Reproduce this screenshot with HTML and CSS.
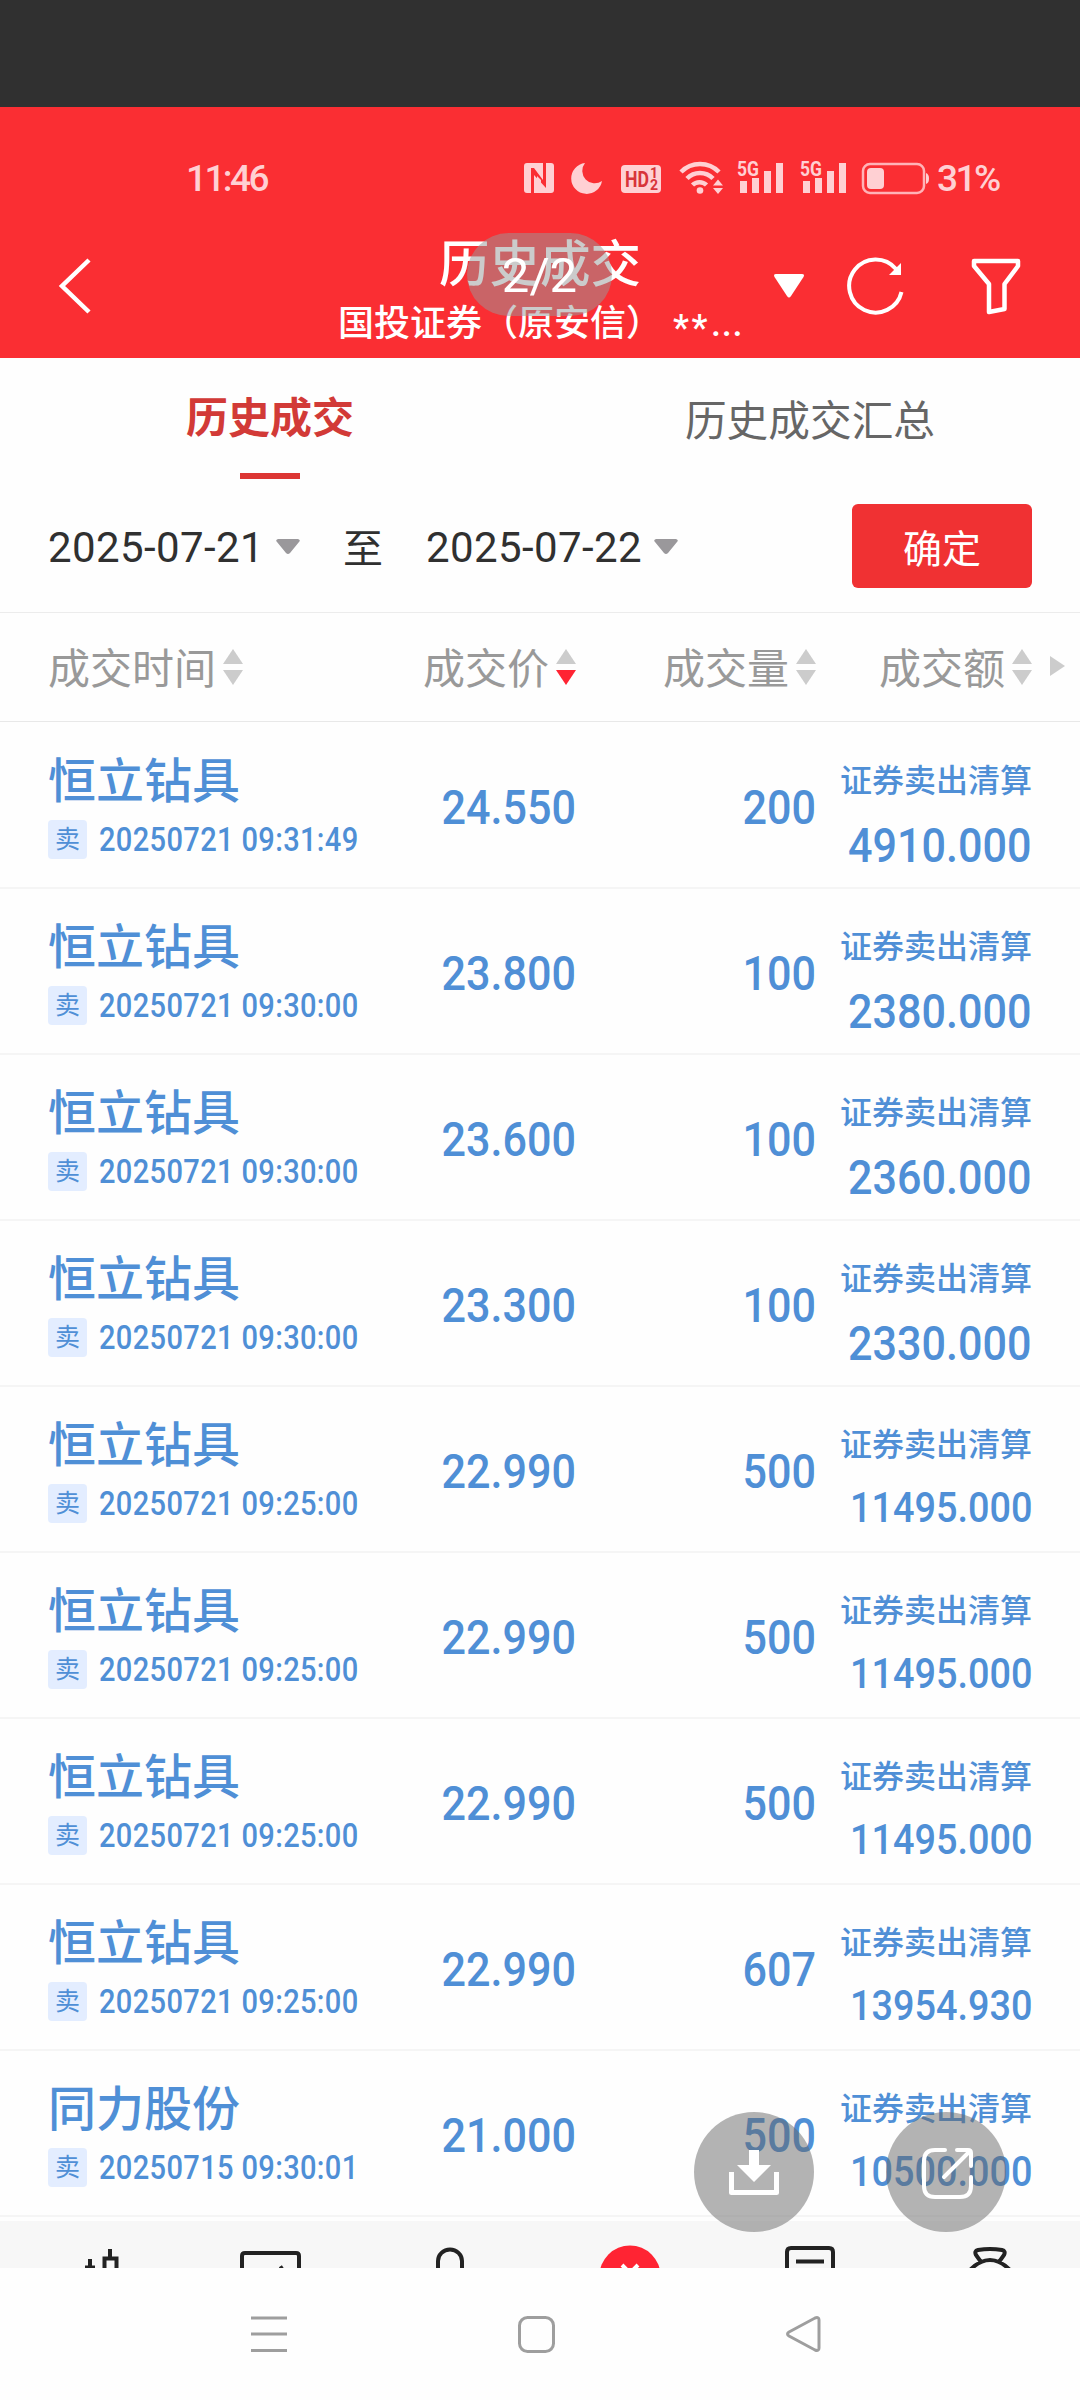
FILE: index.html
```html
<!DOCTYPE html>
<html lang="zh-CN">
<head>
    <meta charset="UTF-8">
    <meta name="viewport" content="width=device-width, initial-scale=1.0">
    <title>历史成交</title>
    <link rel="stylesheet" href="styles.css">
</head>
<body>
    <div class="top-strip"></div>

    <header class="header">
        <div class="status-bar">
            <span class="status-time">11:46</span>
            <svg class="status-icons" width="410" height="40" viewBox="522 157 410 40">
                <!-- NFC -->
                <path fill-rule="evenodd" d="M527 163h24q3 0 3 3v24q0 3-3 3h-24q-3 0-3-3v-24q0-3 3-3zM531 168v25h3v-18l12 13v-25h-3v17l-9-12z"/>
                <path d="M537 176l4 4v9l-4 3z"/>
                <!-- Do not disturb -->
                <path d="M585 163a15.500 15.500 0 1 0 17 18a12.500 12.500 0 0 1-17-18z"/>
                <!-- HD -->
                <rect x="621" y="165" width="40" height="28" rx="4"/>
                <text class="hd-text" x="625" y="187" textLength="24" lengthAdjust="spacingAndGlyphs">HD</text>
                <text class="hd-num" x="650" y="178">1</text>
                <text class="hd-num" x="650" y="190">2</text>
                <!-- Wi-Fi -->
                <g class="line">
                    <path d="M681 172a26.500 26.500 0 0 1 38 0M687 178.500a18 18 0 0 1 26 0M692.500 185a10 10 0 0 1 14 0"/>
                </g>
                <circle cx="700" cy="190.500" r="3.300"/>
                <path d="M713 185.500l5-6 5 6zM713 188l5 6 5-6z"/>
                <!-- Signals -->
                <text class="net-text" x="737" y="176" textLength="22" lengthAdjust="spacingAndGlyphs">5G</text>
                <path d="M740 181h7v12h-7zM752 178h7v15h-7zM764 171h7v22h-7zM776 163h7v30h-7z"/>
                <text class="net-text" x="800" y="176" textLength="22" lengthAdjust="spacingAndGlyphs">5G</text>
                <path d="M803 181h7v12h-7zM815 178h7v15h-7zM827 171h7v22h-7zM839 163h7v30h-7z"/>
                <!-- Battery -->
                <rect class="battery" x="863" y="164" width="61" height="29" rx="7"/>
                <rect x="867" y="168" width="17" height="21" rx="4"/>
                <path d="M926 173q3 1 3 5.500t-3 5.500z"/>
            </svg>
            <span class="status-battery">31%</span>
        </div>

        <div class="title-bar">
            <svg class="icon-back" width="34" height="60" viewBox="0 0 34 60"><path d="M31 4L4 30l27 26"/></svg>
            <div class="title-box">
                <h1>历史成交</h1>
                <p>国投证券（原安信）&nbsp;<span class="mask">**</span><span class="dots">...</span></p>
                <span class="page-badge">2/2</span>
            </div>
            <svg class="icon-caret" width="32" height="26" viewBox="0 0 32 26"><path d="M3 1h26q3 0 1.500 3L18 23q-2 3-4 0L1.500 4Q0 1 3 1z"/></svg>
            <svg class="icon-refresh" width="62" height="62" viewBox="0 0 62 62">
                <path class="line" d="M56.500 37A26.500 26.500 0 1 1 51 14"/>
                <path class="fill" d="M56 8v12H44z"/>
            </svg>
            <svg class="icon-filter" width="52" height="58" viewBox="0 0 52 58"><path d="M4 4h44v5L34.500 27v25L19 55V27L4 9z"/></svg>
        </div>
    </header>

    <nav class="tabs">
        <div class="tab active">历史成交</div>
        <div class="tab">历史成交汇总</div>
    </nav>

    <div class="date-bar">
        <span class="date">2025-07-21</span>
        <svg class="date-caret" width="24" height="15" viewBox="0 0 24 15"><path d="M2 0h20q3 1 1 3L14 14q-2 2-4 0L1 3Q-1 1 2 0z"/></svg>
        <span class="date-to">至</span>
        <span class="date">2025-07-22</span>
        <svg class="date-caret" width="24" height="15" viewBox="0 0 24 15"><path d="M2 0h20q3 1 1 3L14 14q-2 2-4 0L1 3Q-1 1 2 0z"/></svg>
        <button class="confirm">确定</button>
    </div>

    <div class="grid table-head">
        <div class="th">成交时间<span class="sort"></span></div>
        <div class="th">成交价<span class="sort down"></span></div>
        <div class="th">成交量<span class="sort"></span></div>
        <div class="th">成交额<span class="sort"></span></div>
        <span class="more"></span>
    </div>

    <div class="trade-list" id="trade-list">
        <!-- Trades will appear here -->
    </div>

    <div class="bottom-tabs">
        <svg width="180" height="47" viewBox="0 2221 180 47"><path d="M90 2259v9M85 2267.500h10M110 2249v9M104.500 2268v-9.500h12v9.500"/></svg>
        <svg width="180" height="47" viewBox="180 2221 180 47"><path d="M242 2268v-12q0-3 3-3h51q3 0 3 3v12M280 2269l3-2"/></svg>
        <svg width="180" height="47" viewBox="360 2221 180 47"><path d="M438 2270v-9a12 11.500 0 0 1 24 0v9"/></svg>
        <svg width="180" height="47" viewBox="540 2221 180 47"><circle class="red" cx="630" cy="2276" r="30.500"/><path class="white" d="M622 2265l8 8 8-8"/></svg>
        <svg width="180" height="47" viewBox="720 2221 180 47"><path d="M787 2270v-18q0-4 4-4h38q4 0 4 4v18M796 2261.500h28"/></svg>
        <svg width="180" height="47" viewBox="900 2221 180 47"><path d="M981 2262l-5-7q-2-4 2-5 12-2 24 0 4 1 2 5l-5 7M970 2270q20-20 40 0"/></svg>
    </div>

    <div class="system-nav">
        <svg width="36" height="38" viewBox="0 0 36 38"><path d="M0 3h36M0 19h36M0 35.500h36"/></svg>
        <svg width="40" height="38" viewBox="0 0 40 38"><rect x="3.500" y="2.500" width="34" height="34" rx="8"/></svg>
        <svg width="38" height="38" viewBox="0 0 38 38"><path d="M4 17L30 3q4-1.500 4 2v28q0 3.500-4 2L4 21q-3-2 0-4z"/></svg>
    </div>

    <div class="float-buttons">
        <button class="float-btn">
            <svg width="60" height="60" viewBox="724 2142 60 60">
                <path class="fill" d="M749 2150h10v15h12l-17 17-17-17h12z"/>
                <path class="tray" d="M731.500 2172v20.500h45V2172"/>
            </svg>
        </button>
        <button class="float-btn">
            <svg width="60" height="60" viewBox="916 2142 60 60">
                <path class="line" d="M945 2150h-10q-11 0-11 11v25q0 11 11 11h25q11 0 11-11v-9M957 2150h11q3 0 3 3v13M969 2152l-25 25"/>
            </svg>
        </button>
    </div>

    <script>
        const trades = [
            { name: '恒立钻具', time: '20250721 09:31:49', price: '24.550', volume: 200, amount: '4910.000' },
            { name: '恒立钻具', time: '20250721 09:30:00', price: '23.800', volume: 100, amount: '2380.000' },
            { name: '恒立钻具', time: '20250721 09:30:00', price: '23.600', volume: 100, amount: '2360.000' },
            { name: '恒立钻具', time: '20250721 09:30:00', price: '23.300', volume: 100, amount: '2330.000' },
            { name: '恒立钻具', time: '20250721 09:25:00', price: '22.990', volume: 500, amount: '11495.000' },
            { name: '恒立钻具', time: '20250721 09:25:00', price: '22.990', volume: 500, amount: '11495.000' },
            { name: '恒立钻具', time: '20250721 09:25:00', price: '22.990', volume: 500, amount: '11495.000' },
            { name: '恒立钻具', time: '20250721 09:25:00', price: '22.990', volume: 607, amount: '13954.930' },
            { name: '同力股份', time: '20250715 09:30:01', price: '21.000', volume: 500, amount: '10500.000' }
        ];

        const list = document.getElementById('trade-list');
        trades.forEach(trade => {
            const row = document.createElement('div');
            row.className = 'grid trade';
            // Long amounts use a smaller size so they fit the column
            const size = trade.amount.length > 8 ? 'amount small' : 'amount';
            row.innerHTML = `
                <div class="stock">
                    <div class="name">${trade.name}</div>
                    <div class="meta"><span class="side">卖</span><span class="time">${trade.time}</span></div>
                </div>
                <div class="num">${trade.price}</div>
                <div class="num">${trade.volume}</div>
                <div class="settle">
                    <div class="label">证券卖出清算</div>
                    <div class="${size}">${trade.amount}</div>
                </div>
            `;
            list.appendChild(row);
        });
    </script>
</body>
</html>
```

FILE: styles.css
```css
* {
    box-sizing: border-box;
}
body {
    margin: 0;
    width: 1080px;
    height: 2400px;
    position: relative;
    overflow: hidden;
    background-color: #fefefe;
    font-family: Roboto, "Noto Sans CJK SC", sans-serif;
}
svg {
    display: block;
    flex-shrink: 0;
}
button {
    border: none;
    padding: 0;
    font-family: inherit;
}
.top-strip {
    height: 107px;
    background-color: #303030;
}

/* Header */
.header {
    height: 251px;
    background-color: #fa2e33;
    color: #fff;
}
.status-bar {
    height: 126px;
    padding: 50px 0 0 186px;
    display: flex;
    align-items: flex-start;
    color: #ffd0d3;
    font-size: 37px;
    line-height: 44px;
}
.status-time {
    width: 336px;
    font-weight: 500;
    letter-spacing: -2.6px;
}
.status-icons {
    fill: #ffd0d3;
}
.status-icons .line {
    fill: none;
    stroke: #ffd0d3;
    stroke-width: 4.5;
}
.status-icons .battery {
    fill: none;
    stroke: #ffb3b7;
    stroke-width: 2.5;
}
.hd-text {
    font-size: 22px;
    font-weight: bold;
    fill: #d8343a;
}
.hd-num {
    font-size: 14px;
    font-weight: bold;
    fill: #d8343a;
}
.net-text {
    font-size: 21px;
    font-weight: bold;
}
.status-battery {
    margin-left: 5px;
    font-weight: 500;
    letter-spacing: -2.5px;
}
.title-bar {
    height: 125px;
    padding-left: 58px;
    display: flex;
}
.icon-back {
    margin-top: 23px;
    fill: none;
    stroke: #fff;
    stroke-width: 4.5;
}
.title-box {
    position: relative;
    width: 432px;
    margin-left: 230px;
    padding-left: 16px;
}
.title-box h1 {
    margin: 0 0 0 101px;
    font-size: 50.5px;
    font-weight: 500;
    line-height: 64px;
}
.title-box p {
    margin: 6px 0 0;
    font-size: 36px;
    font-weight: 500;
    line-height: 42px;
    white-space: nowrap;
}
.mask {
    display: inline-block;
    margin: 0 1px 0 2px;
    letter-spacing: 2.5px;
    line-height: 30px;
    vertical-align: -4px;
}
.dots {
    letter-spacing: 0.8px;
}
.page-badge {
    position: absolute;
    left: 145px;
    top: 0;
    width: 145px;
    height: 83px;
    border-radius: 42px;
    background-color: rgba(153, 153, 153, 0.51);
    font-size: 49px;
    line-height: 86px;
    text-align: center;
}
.icon-caret {
    margin: 40px 0 0 19px;
    fill: #fff;
}
.icon-refresh {
    margin: 22px 0 0 40px;
}
.icon-refresh .line {
    fill: none;
    stroke: #fff;
    stroke-width: 4;
}
.icon-refresh .fill {
    fill: #fff;
}
.icon-filter {
    margin: 24px 0 0 63px;
    fill: none;
    stroke: #fff;
    stroke-width: 4.5;
    stroke-linejoin: round;
}

/* Tabs */
.tabs {
    height: 122px;
    display: flex;
}
.tab {
    flex: 1;
    display: flex;
    flex-direction: column;
    align-items: center;
    padding-top: 34px;
    font-size: 41.7px;
    line-height: 60px;
    color: #666;
}
.tab.active {
    padding-top: 31px;
    font-size: 42px;
    font-weight: 600;
    color: #d23a37;
}
.tab.active::after {
    content: "";
    width: 60px;
    height: 6px;
    margin-top: 24px;
    background-color: #dc3633;
}

/* Date filter */
.date-bar {
    height: 133px;
    padding: 0 48px 0 48px;
    display: flex;
    align-items: center;
    border-bottom: 1px solid #ececec;
    font-size: 42px;
    color: #303030;
}
.date {
    width: 216px;
    padding-top: 2px;
    letter-spacing: 0.4px;
    white-space: nowrap;
}
.date-caret {
    margin-left: 12px;
    fill: #9a989b;
}
.date-to {
    width: 83px;
    margin-left: 43px;
    font-size: 40px;
}
.confirm {
    width: 180px;
    height: 84px;
    margin-left: auto;
    border-radius: 6px;
    background-color: #f03133;
    color: #fff;
    font-size: 39px;
}

/* Table */
.grid {
    display: grid;
    grid-template-columns: 348px 180px 240px 216px;
    padding: 0 48px;
}
.table-head {
    position: relative;
    height: 109px;
    padding-bottom: 3px;
    align-items: center;
    border-bottom: 1px solid #e8e8e8;
    font-size: 42px;
    color: #999;
}
.th {
    display: flex;
    align-items: center;
    justify-content: flex-end;
}
.th:first-child {
    justify-content: flex-start;
}
.sort {
    display: flex;
    flex-direction: column;
    gap: 6px;
    margin: 3px 0 0 7px;
}
.sort::before,
.sort::after {
    content: "";
    border: 10.5px solid transparent;
    border-top-width: 0;
    border-bottom: 15px solid #ccc;
}
.sort::after {
    border-bottom-width: 0;
    border-bottom-color: transparent;
    border-top: 15px solid #ccc;
}
.sort.down::after {
    border-top-color: #ff2433;
}
.more {
    position: absolute;
    right: 15px;
    top: 43px;
    border: 10.5px solid transparent;
    border-right-width: 0;
    border-left: 15px solid #ccc;
}
.trade-list {
    padding-top: 1px;
}
.trade {
    height: 166px;
    border-bottom: 2px solid #f5f5f5;
    color: #4f8fd6;
}
.name {
    margin-top: 23px;
    font-size: 48px;
    font-weight: 500;
    line-height: 72px;
}
.meta {
    display: flex;
    align-items: center;
    margin-top: 1px;
}
.side {
    width: 39px;
    height: 39px;
    border-radius: 4px;
    background-color: #e3edff;
    font-size: 25px;
    line-height: 39px;
    text-align: center;
}
/* Figures are condensed to look like the DIN digits of the app */
.time {
    margin-left: 12px;
    padding-top: 1px;
    font-size: 33px;
    font-weight: 500;
    letter-spacing: 0.4px;
    white-space: nowrap;
    transform: scaleX(0.88);
    transform-origin: left;
}
.num,
.amount {
    font-size: 49px;
    font-weight: 500;
    line-height: 60px;
    white-space: nowrap;
    text-align: right;
    transform: scaleX(0.88);
    transform-origin: right;
}
.num {
    padding-top: 55px;
}
.settle {
    display: flex;
    flex-direction: column;
    align-items: flex-end;
}
.label {
    margin-top: 34px;
    font-size: 32px;
    font-weight: 500;
    line-height: 48px;
}
.amount {
    margin-top: 11px;
}
.amount.small {
    margin-top: 8px;
    font-size: 43px;
}

/* Bottom tabs are cut off by the system bar */
.bottom-tabs {
    height: 47px;
    margin-top: 4px;
    display: flex;
    background-color: #f7f7f7;
    fill: none;
    stroke: #222;
    stroke-width: 4;
}
.bottom-tabs .red {
    fill: #ff2433;
    stroke: none;
}
.bottom-tabs .white {
    stroke: #fff;
}
.system-nav {
    height: 132px;
    display: flex;
    gap: 229px;
    padding: 47px 0 0 251px;
    fill: none;
    stroke: #9e9e9e;
    stroke-width: 3;
}

/* Floating buttons */
.float-buttons {
    position: absolute;
    left: 694px;
    top: 2112px;
    display: flex;
    gap: 72px;
}
.float-btn {
    width: 120px;
    height: 120px;
    border-radius: 50%;
    background-color: rgba(102, 102, 102, 0.49);
    display: flex;
    align-items: center;
    justify-content: center;
}
.float-btn .fill {
    fill: #fff;
}
.float-btn .tray {
    fill: none;
    stroke: #fff;
    stroke-width: 5;
    stroke-linejoin: round;
}
.float-btn .line {
    fill: none;
    stroke: #fff;
    stroke-width: 4;
    stroke-linecap: round;
}
```
